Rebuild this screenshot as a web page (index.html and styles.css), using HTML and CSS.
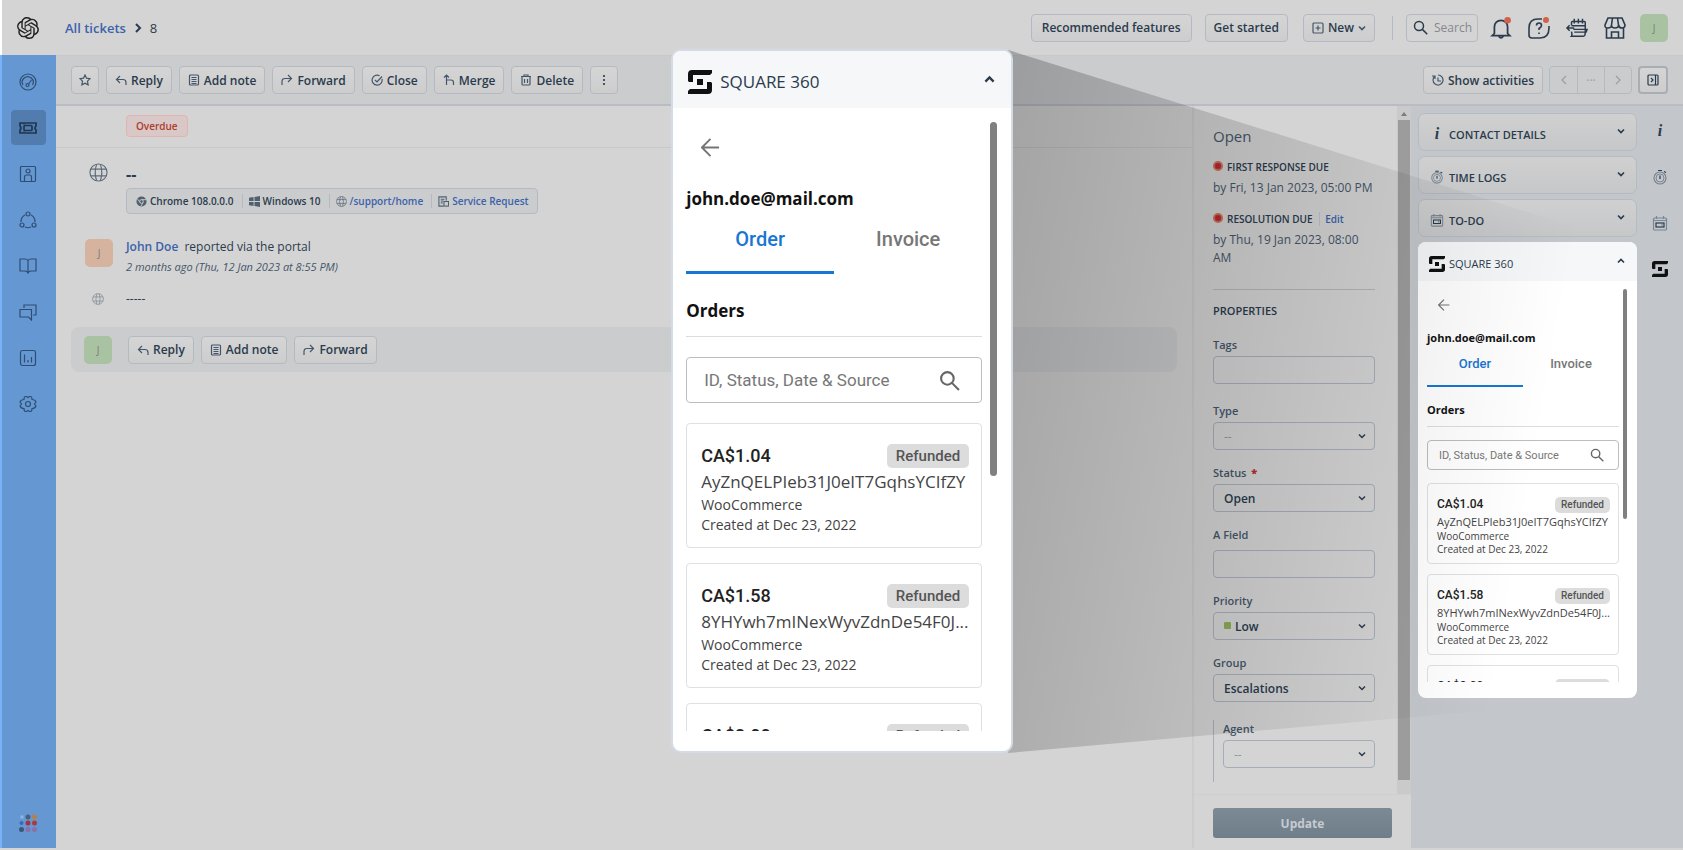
FILE: index.html
```
<!DOCTYPE html>
<html lang="en">
<head>
    <meta charset="UTF-8">
    <meta name="viewport" content="width=device-width, initial-scale=1.0">
    <title>Ticket 8 - Support</title>
    <link rel="stylesheet" href="styles.css">
</head>
<body>
    <!-- Shared icons -->
    <svg class="sprite" aria-hidden="true">
        <symbol id="i-reply" viewBox="0 0 12 12"><path d="M5 2L1.500 5.500 5 9M1.500 5.500H8Q11 5.500 11 8.500V11"/></symbol>
        <symbol id="i-forward" viewBox="0 0 12 12"><path d="M7 1l3.500 3.500L7 8M10.500 4.500H4Q1 4.500 1 7.500V11"/></symbol>
        <symbol id="i-note" viewBox="0 0 12 12"><rect x="1.500" y="1" width="9" height="10" rx="1"/><path d="M3.500 3.500h5M3.500 5.500h5M3.500 7.500h5M3.500 9.500h5"/></symbol>
        <symbol id="i-globe" viewBox="0 0 20 20"><circle cx="10" cy="10" r="9"/><path d="M2 6.500h16M2 13.500h16M8 1.500Q5 10 8 18.500M12 1.500Q15 10 12 18.500"/></symbol>
        <symbol id="i-down" viewBox="0 0 8 8"><path d="M1 2.500l3 3 3-3"/></symbol>
        <symbol id="i-up" viewBox="0 0 8 8"><path d="M1 5.500l3-3 3 3"/></symbol>
        <symbol id="i-search" viewBox="0 0 20 20"><circle cx="8" cy="8" r="6"/><path d="M12.500 12.500L19 19"/></symbol>
        <symbol id="i-watch" viewBox="0 0 16 16"><circle cx="8" cy="9" r="6" class="soft"/><circle cx="8" cy="9" r="4" class="soft thin"/><path d="M8 6.500V10M6 1.500h4M12 2.500l2 1"/></symbol>
        <symbol id="i-todo" viewBox="0 0 16 16"><rect x="1.500" y="3" width="13" height="12" rx="1" class="soft"/><path class="soft" d="M4.500 1v3M11.500 1v3M2 5.500h12"/><rect x="4" y="8" width="8" height="4"/><path d="M9.500 10h1"/></symbol>
        <symbol id="i-square" viewBox="0 0 24 24"><path d="M4 0H24V3l-2 2H5v7H1l-1-1V4Q0 0 4 0zM20 24H0V21l2-2H19V12h4l1 1v7Q24 24 20 24zM9 9h6v6H9z"/></symbol>
    </svg>

    <div class="app">
        <header class="topbar">
            <a href="#" class="logo" aria-label="Home">
                <svg viewBox="0 0 24 24"><path d="M22.282 9.821a5.985 5.985 0 0 0-.516-4.911 6.046 6.046 0 0 0-6.51-2.9A6.065 6.065 0 0 0 4.981 4.182a5.985 5.985 0 0 0-3.998 2.9 6.046 6.046 0 0 0 .743 7.097 5.98 5.98 0 0 0 .511 4.911 6.051 6.051 0 0 0 6.515 2.9A5.985 5.985 0 0 0 13.26 24a6.056 6.056 0 0 0 5.772-4.206 5.989 5.989 0 0 0 3.998-2.9 6.056 6.056 0 0 0-.748-7.073zm-9.022 12.608a4.476 4.476 0 0 1-2.876-1.041l.142-.08 4.778-2.758a.795.795 0 0 0 .393-.681v-6.737l2.02 1.169a.071.071 0 0 1 .038.052v5.583a4.504 4.504 0 0 1-4.495 4.494zm-9.661-4.125a4.471 4.471 0 0 1-.535-3.014l.142.085 4.783 2.758a.771.771 0 0 0 .781 0l5.843-3.369v2.332a.08.08 0 0 1-.033.062L9.74 19.95a4.499 4.499 0 0 1-6.141-1.646zM2.341 7.896a4.485 4.485 0 0 1 2.366-1.973V11.6a.766.766 0 0 0 .388.677l5.814 3.354-2.02 1.169a.076.076 0 0 1-.071 0l-4.83-2.787A4.504 4.504 0 0 1 2.341 7.872zm16.596 3.855L13.104 8.364 15.119 7.2a.076.076 0 0 1 .071 0l4.83 2.791a4.494 4.494 0 0 1-.676 8.104v-5.677a.79.79 0 0 0-.407-.667zm2.011-3.023l-.142-.085-4.774-2.782a.776.776 0 0 0-.785 0L9.409 9.23V6.897a.066.066 0 0 1 .028-.061l4.83-2.787a4.499 4.499 0 0 1 6.681 4.66zM8.307 12.863l-2.02-1.164a.08.08 0 0 1-.038-.057V6.074a4.499 4.499 0 0 1 7.376-3.454l-.142.081L8.704 5.459a.795.795 0 0 0-.393.681zm1.097-2.365l2.602-1.5 2.607 1.5v2.999l-2.597 1.5-2.607-1.5z"/></svg>
            </a>
            <nav class="breadcrumb">
                <a href="#">All tickets</a>
                <svg class="icon" viewBox="0 0 8 10"><path d="M2 1l4 4-4 4"/></svg>
                <span>8</span>
            </nav>
            <div class="topbar-actions">
                <button class="btn roomy">Recommended features</button>
                <button class="btn get-started">Get started</button>
                <button class="btn new-btn">
                    <svg class="icon" viewBox="0 0 12 12"><rect x="1" y="1" width="10" height="10" rx="1"/><path d="M6 3.500v5M3.500 6h5"/></svg>
                    New
                    <svg class="icon caret"><use href="#i-down"/></svg>
                </button>
                <span class="divider"></span>
                <label class="top-search">
                    <svg class="icon"><use href="#i-search"/></svg>
                    <input type="text" placeholder="Search" aria-label="Search">
                </label>
                <div class="top-icons">
                    <button class="icon-btn" aria-label="Notifications">
                        <svg class="icon" viewBox="0 0 20 20"><path d="M4 15V9a6 6 0 0 1 12 0v6l2 2H2zM8 17.500q2 3 4 0"/><circle class="dot" cx="16" cy="3" r="3"/></svg>
                    </button>
                    <button class="icon-btn" aria-label="Help">
                        <svg class="icon" viewBox="0 0 22 22"><path d="M14 2H10Q1 2 1 11v7q0 3 3 3h8q9 0 9-10V9M8.500 8.500q0-2.500 2.500-2.500t2.500 2.500q0 1.500-2.500 3v1.500M11 15.500v1.500"/><circle class="dot" cx="18" cy="3" r="3"/></svg>
                    </button>
                    <button class="icon-btn" aria-label="Schedule">
                        <svg class="icon" viewBox="0 0 24 22"><path d="M6 8V5q0-1 1-1h13q1 0 1 1v10M9 1v5M13.500 1v5M18 1v5M6 8.500h15M8 12.500h15l-1 3H9M1 11h8M4 8l-3 3 3 3M6 15q1 4 0 5h13q2 0 2-4"/></svg>
                    </button>
                    <button class="icon-btn" aria-label="Marketplace">
                        <svg class="icon" viewBox="0 0 22 22"><path d="M4 1h14l3 7q0 3-3 3t-3.500-3q0 3-3.500 3T7.500 8q0 3-3.500 3T1 8zM8.500 1l-1 7M13.500 1l1 7M2.500 11v10h17V11M7.500 21v-6h7v6"/></svg>
                    </button>
                </div>
                <button class="avatar green">J</button>
            </div>
        </header>

        <div class="shell">
            <nav class="sidebar">
                <a href="#" aria-label="Dashboard"><svg class="icon" viewBox="0 0 18 18"><circle cx="9" cy="9" r="8"/><path d="M4 12a5.500 5.500 0 1 1 9.500 0M9.500 11l3-4"/><circle cx="8.500" cy="12" r="1.500"/></svg></a>
                <a href="#" class="active" aria-label="Tickets"><svg class="icon heavy" viewBox="0 0 18 18"><path d="M1 4h3q1 1.500 2 0h11v3q-2 2 0 4v3H6q-1-1.500-2 0H1v-3q2-2 0-4z"/><rect x="5" y="6.500" width="8" height="5" rx="1"/></svg></a>
                <a href="#" aria-label="Contacts"><svg class="icon" viewBox="0 0 18 18"><rect x="1.500" y="1.500" width="15" height="15" rx="1"/><circle cx="9" cy="6" r="2"/><path d="M5.500 16V12q0-2 2-2h3q2 0 2 2v4"/></svg></a>
                <a href="#" aria-label="Social"><svg class="icon" viewBox="0 0 18 18"><circle cx="9" cy="3" r="2"/><circle cx="3" cy="14" r="2"/><circle cx="15" cy="14" r="2"/><path d="M6 4Q2 6 2 11M12 4q4 2 4 7M6 16q3 1.500 6 0"/></svg></a>
                <a href="#" aria-label="Solutions"><svg class="icon" viewBox="0 0 18 18"><path d="M9 3.500Q8 2 6 2H1v12h5q2 0 3 2 1-2 3-2h5V2h-5Q10 2 9 3.500V16"/></svg></a>
                <a href="#" aria-label="Forums"><svg class="icon" viewBox="0 0 18 18"><path d="M5 5V2h12v10h-3M1 6.500h11.500V14v3l-3-3H1z"/></svg></a>
                <a href="#" aria-label="Analytics"><svg class="icon" viewBox="0 0 18 18"><rect x="1.500" y="1.500" width="15" height="15" rx="2"/><path d="M5.500 5.500v8M9 11v2.500M12.500 8v5.500"/></svg></a>
                <a href="#" aria-label="Admin"><svg class="icon" viewBox="0 0 18 18"><path d="M6.500 1.500h1l1.500 1 1.500-1h1q1.500 0 1.500 3 3 0 4 2.500l-1.500 2L17 11q-1 2.500-4 2.500 0 3-1.500 3h-1L9 15.500l-1.500 1h-1q-1.500 0-1.500-3-3 0-4-2.500L2.500 9 1 7q1-2.500 4-2.500 0-3 1.500-3z"/><circle cx="9" cy="9" r="2.500"/></svg></a>
                <a href="#" class="switcher" aria-label="App switcher">
                    <svg viewBox="0 0 18 18"><rect x="1.500" y="1.500" width="3" height="3" fill="#8fb6e4"/><circle cx="9" cy="3" r="2.500" fill="#4a6078"/><circle cx="15.500" cy="3" r="2.500" fill="#b4813f"/><circle cx="2.500" cy="9" r="2" fill="#2f6ebe"/><circle cx="9" cy="9" r="2.500" fill="#a83240"/><circle cx="15.500" cy="9" r="2.500" fill="#a83c40"/><circle cx="2.500" cy="15.500" r="2.500" fill="#3a567a"/><circle cx="9" cy="15.500" r="2.500" fill="#8a72a8"/><circle cx="15.500" cy="15.500" r="2.500" fill="#8a72a8"/></svg>
                </a>
            </nav>

            <div class="workspace">
                <div class="toolbar">
                    <button class="btn" aria-label="Star"><svg class="icon star" viewBox="0 0 12 12"><path d="M6 1l1.500 3.200 3.500.5-2.500 2.500.6 3.600L6 9.100 2.900 10.800l.6-3.600L1 4.700l3.500-.5z"/></svg></button>
                    <button class="btn"><svg class="icon"><use href="#i-reply"/></svg>Reply</button>
                    <button class="btn"><svg class="icon"><use href="#i-note"/></svg>Add note</button>
                    <button class="btn"><svg class="icon"><use href="#i-forward"/></svg>Forward</button>
                    <button class="btn"><svg class="icon" viewBox="0 0 12 12"><path d="M11 5a5 5 0 1 1-2.500-3.300M4 6l2 2 5-5.500"/></svg>Close</button>
                    <button class="btn"><svg class="icon" viewBox="0 0 12 12"><path d="M1 3.500L3.500 1 6 3.500M3.500 1v10M3.500 6H8q2.500 0 2.500 2.500V11"/></svg>Merge</button>
                    <button class="btn"><svg class="icon" viewBox="0 0 12 12"><path d="M1 2.500h10M4 2.500V1h4v1.500M2 3v7q0 1 1 1h6q1 0 1-1V3M4.500 5v4M7.500 5v4"/></svg>Delete</button>
                    <button class="btn" aria-label="More"><svg class="icon more" viewBox="0 0 12 12"><path d="M6 1v2M6 5v2M6 9v2"/></svg></button>
                    <div class="toolbar-end">
                        <button class="btn"><svg class="icon" viewBox="0 0 12 12"><path d="M3 2a5 5 0 1 0 3-1M3 5V2H0M6 3.500V7h3"/></svg>Show activities</button>
                        <div class="pager">
                            <button aria-label="Previous"><svg class="icon" viewBox="0 0 8 10"><path d="M6 1L2 5l4 4"/></svg></button>
                            <button aria-label="List">···</button>
                            <button aria-label="Next"><svg class="icon" viewBox="0 0 8 10"><path d="M2 1l4 4-4 4"/></svg></button>
                        </div>
                        <button class="btn toggle" aria-label="Toggle panel"><svg class="icon" viewBox="0 0 12 12"><rect x="1" y="1" width="10" height="10" rx="1"/><path d="M8.500 1v10M4 4l2 2-2 2"/></svg></button>
                    </div>
                </div>

                <div class="columns">
                    <main class="ticket">
                        <div class="status-strip"><span class="overdue">Overdue</span></div>
                        <section class="row subject">
                            <svg class="icon globe"><use href="#i-globe"/></svg>
                            <div>
                                <h1>--</h1>
                                <ul class="meta">
                                    <li><svg class="icon" viewBox="0 0 12 12"><circle class="solid" cx="6" cy="6" r="5.500"/><circle class="ring" cx="6" cy="6" r="2"/><path class="ring" d="M6 4h5M4.300 7L2 3.500M7.700 7L5.500 11"/></svg>Chrome 108.0.0.0</li>
                                    <li><svg class="icon" viewBox="0 0 12 12"><path class="solid" d="M0 2l5-1v4.500H0zM6 1l6-1v5.500H6zM0 6.500h5V11l-5-1zM6 6.500h6V12l-6-1z"/></svg>Windows 10</li>
                                    <li><svg class="icon"><use href="#i-globe"/></svg><a href="#">/support/home</a></li>
                                    <li><svg class="icon" viewBox="0 0 12 12"><path d="M6 11H1V1h8v4M3 3.500h4M3 5.500h3M3 7.500h2"/><rect x="6.500" y="6" width="5" height="5"/></svg><a href="#">Service Request</a></li>
                                </ul>
                            </div>
                        </section>
                        <section class="row report">
                            <span class="avatar orange">J</span>
                            <div>
                                <p><a href="#">John Doe</a> reported via the portal</p>
                                <p class="when">2 months ago (Thu, 12 Jan 2023 at 8:55 PM)</p>
                            </div>
                        </section>
                        <section class="row message">
                            <svg class="icon globe-sm"><use href="#i-globe"/></svg>
                            <p>-----</p>
                        </section>
                        <section class="reply-bar">
                            <span class="avatar green">J</span>
                            <button class="btn"><svg class="icon"><use href="#i-reply"/></svg>Reply</button>
                            <button class="btn"><svg class="icon"><use href="#i-note"/></svg>Add note</button>
                            <button class="btn"><svg class="icon"><use href="#i-forward"/></svg>Forward</button>
                        </section>
                    </main>

                    <aside class="properties">
                        <div class="properties-scroll">
                            <form class="properties-form" id="propsForm">
                                <h2>Open</h2>
                                <div class="due">
                                    <h3><i class="alert"></i>FIRST RESPONSE DUE</h3>
                                    <p>by Fri, 13 Jan 2023, 05:00 PM</p>
                                </div>
                                <div class="due">
                                    <h3><i class="alert"></i>RESOLUTION DUE <a href="#">Edit</a></h3>
                                    <p>by Thu, 19 Jan 2023, 08:00 AM</p>
                                </div>
                                <h3 class="section-title">PROPERTIES</h3>
                                <div class="field wide"><label for="tags">Tags</label><input type="text" id="tags"></div>
                                <div class="field"><label for="type">Type</label>
                                    <div class="select empty"><select id="type"><option>--</option></select><svg class="icon"><use href="#i-down"/></svg></div></div>
                                <div class="field"><label for="status">Status <b>*</b></label>
                                    <div class="select"><select id="status"><option>Open</option></select><svg class="icon"><use href="#i-down"/></svg></div></div>
                                <div class="field spaced"><label for="afield">A Field</label><input type="text" id="afield"></div>
                                <div class="field"><label for="priority">Priority</label>
                                    <div class="select low"><select id="priority"><option>Low</option></select><svg class="icon"><use href="#i-down"/></svg></div></div>
                                <div class="field wide"><label for="group">Group</label>
                                    <div class="select"><select id="group"><option>Escalations</option></select><svg class="icon"><use href="#i-down"/></svg></div></div>
                                <div class="field nested"><label for="agent">Agent</label>
                                    <div class="select empty"><select id="agent"><option>--</option></select><svg class="icon"><use href="#i-down"/></svg></div></div>
                            </form>
                            <div class="scrollbar"><span class="arrow"></span><span class="thumb"></span></div>
                        </div>
                        <div class="properties-footer"><button class="update" form="propsForm">Update</button></div>
                    </aside>

                    <aside class="apps">
                        <div class="apps-list">
                            <button class="accordion"><em>i</em>CONTACT DETAILS<svg class="icon caret"><use href="#i-down"/></svg></button>
                            <button class="accordion"><svg class="icon pic"><use href="#i-watch"/></svg>TIME LOGS<svg class="icon caret"><use href="#i-down"/></svg></button>
                            <button class="accordion"><svg class="icon pic"><use href="#i-todo"/></svg>TO-DO<svg class="icon caret"><use href="#i-down"/></svg></button>
                            <div class="widget small"></div>
                        </div>
                        <nav class="rail">
                            <a href="#" aria-label="Contact details"><em>i</em></a>
                            <a href="#" aria-label="Time logs"><svg class="icon"><use href="#i-watch"/></svg></a>
                            <a href="#" aria-label="To-do"><svg class="icon"><use href="#i-todo"/></svg></a>
                            <a href="#" aria-label="Square 360"><svg class="square-logo"><use href="#i-square"/></svg></a>
                        </nav>
                    </aside>
                </div>
            </div>
        </div>

        <div class="beam"></div>
        <div class="widget large"></div>
    </div>

    <script>
        const orders = [
            { amount: 'CA$1.04', status: 'Refunded', id: 'AyZnQELPIeb31J0eIT7GqhsYCIfZY', source: 'WooCommerce', date: 'Dec 23, 2022' },
            { amount: 'CA$1.58', status: 'Refunded', id: '8YHYwh7mINexWyvZdnDe54F0J...', source: 'WooCommerce', date: 'Dec 23, 2022' },
            { amount: 'CA$2.00', status: 'Refunded', id: 'Qm4TzWc81LrNaPxYe0DfKs7U...', source: 'WooCommerce', date: 'Dec 23, 2022' }
        ];

        // The side panel and the enlarged view show the same widget
        document.querySelectorAll('.widget').forEach(widget => {
            widget.innerHTML = `
                <button class="widget-header">
                    <svg class="square-logo"><use href="#i-square"/></svg>
                    SQUARE 360
                    <svg class="icon caret"><use href="#i-up"/></svg>
                </button>
                <div class="widget-body">
                    <div class="widget-content">
                        <button class="back" aria-label="Back"><svg class="icon" viewBox="0 0 20 20"><path d="M19 10H2M10 1L1 10l9 9"/></svg></button>
                        <p class="email">john.doe@mail.com</p>
                        <div class="tabs">
                            <button class="tab active">Order</button>
                            <button class="tab">Invoice</button>
                        </div>
                        <h4>Orders</h4>
                        <label class="order-search">
                            <input type="text" placeholder="ID, Status, Date &amp; Source" aria-label="Search orders">
                            <svg class="icon"><use href="#i-search"/></svg>
                        </label>
                        ${orders.map(order => `
                            <article class="order">
                                <div class="order-top"><strong>${order.amount}</strong><span class="badge">${order.status}</span></div>
                                <p class="order-id">${order.id}</p>
                                <p>${order.source}</p>
                                <p>Created at ${order.date}</p>
                            </article>
                        `).join('')}
                    </div>
                    <span class="widget-thumb"></span>
                </div>
            `;
        });
    </script>
</body>
</html>
```

FILE: styles.css
```
:root {
    --bg: #d4d4d4;
    --panel: #cbccce;
    --apps-bg: #c3c7cb;
    --line: #b5bac2;
    --text: #2a3b4d;
    --muted: #45566a;
    --link: #3b62ab;
    --blue: #1976d2;
}

* {
    margin: 0;
    padding: 0;
    box-sizing: border-box;
}

body {
    font-family: 'Open Sans', 'Noto Sans', sans-serif;
    font-size: 12px;
    color: var(--text);
    background-color: var(--bg);
}

button,
input,
select {
    font: inherit;
    color: inherit;
    background: none;
    border: none;
}

a {
    color: var(--link);
    text-decoration: none;
}

ul {
    list-style: none;
}

.sprite {
    position: absolute;
    width: 0;
    height: 0;
}

.icon {
    width: 12px;
    height: 12px;
    flex: none;
    fill: none;
    stroke: currentColor;
    stroke-width: 1.2;
}

.icon .solid {
    fill: currentColor;
    stroke: none;
}

.icon .ring {
    stroke: var(--panel);
    stroke-width: 1;
}

.icon .dot {
    fill: #d0614a;
    stroke: none;
}

.soft {
    stroke: #7b8794;
}

.thin {
    stroke-width: 1;
}

.icon.caret {
    width: 8px;
    height: 8px;
    stroke-width: 1.7;
}

.app {
    position: relative;
    display: flex;
    flex-direction: column;
    height: 100vh;
    min-height: 850px;
    overflow: hidden;
}

/* Top bar */
.topbar {
    display: flex;
    align-items: center;
    height: 55px;
    padding-right: 15px;
    border-left: 2px solid #fff;
}

.logo {
    display: flex;
    justify-content: center;
    width: 52px;
}

.logo svg {
    width: 22px;
    height: 22px;
    fill: #222;
}

.breadcrumb {
    display: flex;
    align-items: center;
    gap: 8px;
    padding-left: 11px;
    font-size: 13px;
    font-weight: 600;
}

.breadcrumb .icon {
    width: 8px;
    height: 10px;
    stroke-width: 2;
}

.breadcrumb span {
    font-weight: 400;
}

.topbar-actions {
    display: flex;
    align-items: center;
    margin-left: auto;
}

.btn {
    display: inline-flex;
    align-items: center;
    justify-content: center;
    gap: 4px;
    height: 28px;
    min-width: 28px;
    padding: 0 8px;
    border: 1px solid var(--line);
    border-radius: 4px;
    background: linear-gradient(#d5d5d5, #cdcdce);
    font-weight: 600;
    white-space: nowrap;
}

.btn.roomy {
    padding: 0 10px;
}

.btn[aria-label] {
    padding: 0 7px;
}

.btn .icon {
    color: var(--muted);
}

.get-started {
    margin: 0 15px 0 13px;
}

.topbar .divider {
    width: 1px;
    height: 24px;
    margin: 0 13px 0 17px;
    background-color: var(--line);
}

.top-search {
    display: flex;
    align-items: center;
    gap: 6px;
    width: 72px;
    height: 28px;
    padding-left: 6px;
    border: 1px solid var(--line);
    border-radius: 4px;
}

.top-search .icon {
    width: 15px;
    height: 15px;
    stroke-width: 2;
}

.top-search input {
    width: 42px;
    outline: none;
}

.top-search input::placeholder {
    color: #84898f;
}

.top-icons {
    display: flex;
    gap: 16px;
    margin: 0 14px 0 12px;
}

.icon-btn {
    display: flex;
}

.icon-btn .icon {
    width: 22px;
    height: 22px;
    stroke-width: 1.6;
    overflow: visible;
}

.avatar {
    display: flex;
    align-items: center;
    justify-content: center;
    width: 28px;
    height: 28px;
    border-radius: 5px;
    font-size: 10px;
    color: #7d7d7d;
}

.avatar.green {
    background-color: #a9c3a2;
}

.avatar.orange {
    background-color: #d6b39e;
}

/* Sidebar */
.shell {
    display: flex;
    flex: 1;
    min-height: 0;
    padding-bottom: 2px;
}

.sidebar {
    display: flex;
    flex-direction: column;
    align-items: center;
    gap: 11px;
    width: 56px;
    flex: none;
    padding: 9px 2px 8px 0;
    border-left: 2px solid #78b3fa;
    background-color: #6598d2;
}

.sidebar a {
    display: flex;
    align-items: center;
    justify-content: center;
    width: 35px;
    height: 35px;
    border-radius: 4px;
    color: #2f4d72;
}

.sidebar a.active {
    background-color: #527cae;
    color: #1f3550;
}

.sidebar svg {
    width: 18px;
    height: 18px;
}

.sidebar .heavy {
    stroke-width: 1.7;
}

.sidebar .switcher {
    margin-top: auto;
}

/* Toolbar */
.workspace {
    display: flex;
    flex-direction: column;
    flex: 1;
    min-width: 0;
}

.toolbar {
    display: flex;
    align-items: center;
    gap: 7px;
    height: 51px;
    flex: none;
    padding: 10px 15px;
    border-top: 1px solid #c6c8ca;
    border-bottom: 2px solid #b9bcc4;
    background-color: var(--panel);
}

.toolbar-end {
    display: flex;
    gap: 6px;
    margin-left: auto;
}

.more {
    stroke-width: 2;
}

.pager {
    display: flex;
    border: 1px solid var(--line);
    border-radius: 4px;
    color: #9a9fa5;
}

.pager button {
    display: flex;
    align-items: center;
    justify-content: center;
    width: 27px;
}

.pager button + button {
    border-left: 1px solid var(--line);
}

.pager .icon {
    width: 8px;
    height: 10px;
}

.btn.toggle {
    border: 2px solid #a9adb4;
}

.btn.toggle .icon {
    color: var(--text);
}

/* Ticket */
.columns {
    display: flex;
    flex: 1;
    min-height: 0;
}

.ticket {
    flex: 1;
    min-width: 0;
}

.status-strip {
    height: 42px;
    padding: 9px 0 0 70px;
    border-bottom: 1px solid #c6c8c9;
}

.overdue {
    display: inline-block;
    padding: 0 9px;
    border: 1px solid #dfb5b0;
    border-radius: 4px;
    background-color: #dac8c8;
    font-size: 10px;
    font-weight: 600;
    line-height: 20px;
    color: #ab3d2d;
}

.row {
    display: grid;
    grid-template-columns: 70px 1fr;
}

.subject {
    padding-top: 15px;
}

.subject .globe {
    width: 19px;
    height: 19px;
    margin-left: 33px;
    color: #5d6b7a;
}

h1 {
    font-size: 16px;
    line-height: 22px;
}

.meta {
    display: inline-flex;
    align-items: center;
    height: 26px;
    margin-top: 3px;
    padding: 0 1px;
    border: 1px solid var(--line);
    border-radius: 4px;
    background-color: var(--panel);
    font-size: 10px;
    font-weight: 600;
}

.meta li {
    display: flex;
    align-items: center;
    gap: 3px;
    padding: 0 8px;
}

.meta li + li {
    padding-left: 6px;
    border-left: 1px solid var(--line);
}

.meta .icon {
    width: 11px;
    height: 11px;
    color: #51606f;
}

.report {
    padding-top: 23px;
}

.report .avatar {
    margin: 2px 0 0 29px;
}

.report p {
    line-height: 20px;
}

.report a {
    margin-right: 3px;
    font-weight: 600;
}

.report .when {
    font-size: 11px;
    font-style: italic;
    color: var(--muted);
}

.message {
    padding: 12px 0 18px;
}

.message .globe-sm {
    margin: 4px 0 0 36px;
    color: #7d8894;
}

.message p {
    line-height: 20px;
}

.reply-bar {
    display: flex;
    align-items: center;
    gap: 7px;
    height: 45px;
    margin: 0 15px;
    padding-left: 13px;
    border-radius: 8px;
    background-color: var(--panel);
}

.reply-bar .avatar {
    margin-right: 9px;
}

/* Properties */
.properties {
    display: flex;
    flex-direction: column;
    width: 219px;
    flex: none;
    border-left: 2px solid #cacccd;
}

.properties-scroll {
    display: flex;
    flex: 1;
    min-height: 0;
    overflow: hidden;
}

.properties-form {
    flex: 1;
    padding: 18px 22px 0 19px;
}

h2 {
    font-size: 15px;
    font-weight: 400;
    line-height: 24px;
    color: var(--muted);
}

h3 {
    font-size: 11px;
    font-weight: 600;
    line-height: 20px;
    white-space: nowrap;
}

.due {
    padding: 9px 0 3px;
}

.due h3 {
    font-size: 10px;
}

.due h3 a {
    margin-left: 4px;
    padding-left: 5px;
    border-left: 1px solid #bcc4cc;
}

.due p {
    padding-top: 2px;
    line-height: 18px;
    color: var(--muted);
}

.alert {
    display: inline-block;
    width: 10px;
    height: 10px;
    margin-right: 4px;
    border: 2px solid #c9705c;
    border-radius: 50%;
    background-color: #b8292f;
}

.section-title {
    margin: 19px 0 15px;
    padding-top: 11px;
    border-top: 1px solid #b3b5b8;
}

.field {
    margin-bottom: 14px;
}

.field.wide {
    margin-bottom: 18px;
}

.field label {
    display: block;
    margin-bottom: 2px;
    font-size: 11px;
    font-weight: 600;
    line-height: 18px;
    color: var(--muted);
}

.field.spaced label {
    margin-bottom: 6px;
}

.field label b {
    margin-left: 2px;
    color: #b8292f;
}

.field input,
.select select {
    display: block;
    width: 100%;
    height: 28px;
    padding: 0 10px;
    border: 1px solid #a7adb8;
    border-radius: 4px;
    appearance: none;
    font-weight: 600;
}

.select {
    position: relative;
}

.select .icon {
    position: absolute;
    top: 10px;
    right: 9px;
    width: 8px;
    height: 8px;
    stroke-width: 1.5;
    pointer-events: none;
}

.select.empty select {
    color: #90959b;
    font-weight: 400;
}

.select.low select {
    padding-left: 21px;
}

.select.low::before {
    content: '';
    position: absolute;
    top: 10px;
    left: 11px;
    width: 7px;
    height: 7px;
    border-radius: 1px;
    background-color: #8bab57;
}

.nested {
    padding: 0 0 14px 9px;
    border-left: 1px solid #a7adb8;
}

.scrollbar {
    display: flex;
    flex-direction: column;
    align-items: center;
    width: 14px;
    padding: 6px 1px 14px;
    background-color: #cacaca;
}

.scrollbar .arrow {
    border: 3px solid transparent;
    border-top: none;
    border-bottom: 4px solid #7c7c7c;
}

.scrollbar .thumb {
    flex: 1;
    width: 100%;
    margin-top: 4px;
    background-color: #9c9c9c;
}

.properties-footer {
    padding: 13px 19px 10px;
    border-top: 1px solid #cfcfcf;
}

.update {
    width: 100%;
    height: 30px;
    border-radius: 3px;
    background: linear-gradient(#7c8a95, #6f7e89);
    font-weight: 700;
    color: #c5cbd1;
}

/* Apps panel */
.apps {
    display: flex;
    width: 272px;
    flex: none;
    background-color: var(--apps-bg);
}

.apps-list {
    display: flex;
    flex-direction: column;
    gap: 5px;
    width: 226px;
    padding: 7px 0 0 7px;
}

.accordion {
    display: flex;
    align-items: center;
    gap: 5px;
    height: 38px;
    padding: 4px 11px 0 11px;
    border: 1px solid #b6bbc3;
    border-radius: 7px;
    background: linear-gradient(#d0d0d1, #c6c7c8);
    font-size: 11px;
    font-weight: 600;
}

.accordion .pic {
    width: 14px;
    height: 14px;
}

.accordion .caret {
    margin: 0 0 6px auto;
}

em {
    width: 14px;
    text-align: center;
    font-family: 'Liberation Serif', serif;
    font-size: 16px;
    font-weight: 700;
}

.rail {
    display: flex;
    flex-direction: column;
    align-items: center;
    gap: 30px;
    flex: 1;
    padding-top: 17px;
}

.rail a {
    display: flex;
    align-items: center;
    justify-content: center;
    height: 16px;
    color: var(--text);
}

.rail svg {
    width: 16px;
    height: 16px;
}

.beam {
    position: absolute;
    top: 50px;
    left: calc(40% + 335px);
    right: 46px;
    height: 703px;
    background: linear-gradient(100deg, rgba(0, 0, 0, 0.23), rgba(0, 0, 0, 0.04) 65%, transparent 80%);
    clip-path: polygon(0 0, 100% 196px, 100% 647px, 0 100%);
    pointer-events: none;
}

/* Square 360 widget, in two sizes */
.widget {
    display: flex;
    flex-direction: column;
    width: var(--width);
    height: var(--height);
    overflow: hidden;
    padding-bottom: var(--foot);
    border-radius: 8px;
    background-color: #fff;
    font-size: var(--text-sm);
}

.widget.small {
    --width: 219px;
    --height: 456px;
    --foot: 16px;
    --head: 39px;
    --edge: 9px;
    --logo: 16px;
    --gap: 4px;
    --thumb: 4px;
    --thumb-height: 230px;
    --back-row: 48px;
    --arrow: 12px;
    --row: 18px;
    --tab: 40px;
    --tab-line: 2px;
    --title-top: 14px;
    --title-bottom: 7px;
    --section: 13px;
    --search: 30px;
    --glass: 14px;
    --card-gap: 10px;
    --card-padding: 12px 8px 7px 9px;
    --row-lg: 17px;
    --row-sm: 13px;
    --badge: 16px;
    --badge-padding: 6px;
    --text-sm: 10px;
    --text-md: 11px;
    --text-lg: 12px;
    --text-tab: 13px;
    --text-badge: 10px;
}

.widget.large {
    --width: 342px;
    --height: 704px;
    --foot: 20px;
    --head: 57px;
    --edge: 13px;
    --logo: 24px;
    --gap: 8px;
    --thumb: 7px;
    --thumb-height: 354px;
    --back-row: 78px;
    --arrow: 19px;
    --row: 26px;
    --tab: 62px;
    --tab-line: 3px;
    --title-top: 24px;
    --title-bottom: 12px;
    --section: 20px;
    --search: 46px;
    --glass: 21px;
    --card-gap: 15px;
    --card-padding: 19px 12px 12px 14px;
    --row-lg: 26px;
    --row-sm: 20px;
    --badge: 24px;
    --badge-padding: 9px;
    --text-sm: 14px;
    --text-md: 17px;
    --text-lg: 18px;
    --text-tab: 20px;
    --text-badge: 15px;
    position: absolute;
    top: 49px;
    left: calc(40% - 2px);
    border: 2px solid #d3dce6;
    border-radius: 10px;
}

.widget-header {
    display: flex;
    align-items: center;
    gap: var(--gap);
    height: var(--head);
    flex: none;
    padding: 4px calc(var(--edge) + 3px) 0 calc(var(--edge) + 2px);
    background-color: #f5f7f9;
    font-size: var(--text-md);
}

.square-logo {
    width: var(--logo);
    height: var(--logo);
    fill: #111;
}

.widget-header .caret {
    margin: 0 0 5px auto;
}

.large .widget-header .caret {
    width: 11px;
    height: 11px;
}

.widget-body {
    display: flex;
    flex: 1;
    gap: var(--gap);
    min-height: 0;
    overflow: hidden;
    padding: 0 calc(var(--edge) + 1px) 0 var(--edge);
}

.widget-content {
    flex: 1;
    min-width: 0;
}

.back {
    display: flex;
    align-items: center;
    height: var(--back-row);
    padding-left: calc(var(--edge) + 2px);
    color: #757575;
}

.back .icon {
    width: var(--arrow);
    height: var(--arrow);
    stroke-width: 2;
}

.email {
    font-size: var(--text-md);
    font-weight: 700;
    line-height: var(--row);
    color: #111;
}

.tabs {
    display: flex;
}

.tab {
    flex: 1;
    height: var(--tab);
    padding-bottom: 5px;
    border-bottom: var(--tab-line) solid transparent;
    font-family: Roboto, sans-serif;
    font-size: var(--text-tab);
    font-weight: 500;
    color: #777;
}

.tab.active {
    border-bottom-color: var(--blue);
    color: var(--blue);
}

h4 {
    padding: var(--title-top) 0 var(--title-bottom);
    border-bottom: 1px solid #ddd;
    font-size: var(--text-md);
    line-height: var(--row);
    color: #111;
}

.order-search {
    display: flex;
    align-items: center;
    height: var(--search);
    margin: var(--section) 0;
    padding: 0 14px 0 11px;
    border: 1px solid #bdbdbd;
    border-radius: 4px;
}

.large .order-search {
    padding: 0 21px 0 17px;
}

.order-search input {
    flex: 1;
    min-width: 0;
    outline: none;
    font-family: Roboto, sans-serif;
    font-size: var(--text-md);
}

.order-search input::placeholder {
    color: #777;
}

.order-search .icon {
    width: var(--glass);
    height: var(--glass);
    stroke-width: 2;
    color: #666;
}

.order {
    margin-bottom: var(--card-gap);
    padding: var(--card-padding);
    border: 1px solid #e0e0e0;
    border-radius: 4px;
    line-height: var(--row-sm);
    color: #444;
}

.order-top {
    display: flex;
    align-items: center;
    justify-content: space-between;
    height: var(--row-lg);
}

.order-top strong {
    font-family: Roboto, sans-serif;
    font-size: var(--text-lg);
    font-weight: 500;
    color: #222;
}

.badge {
    padding: 0 var(--badge-padding);
    border-radius: 5px;
    background-color: #dcdcdc;
    font-family: Roboto, sans-serif;
    font-size: var(--text-badge);
    font-weight: 500;
    line-height: var(--badge);
    color: #555;
}

.order-id {
    white-space: nowrap;
    font-size: var(--text-md);
    line-height: var(--row-lg);
}

.widget-thumb {
    width: var(--thumb);
    height: var(--thumb-height);
    margin-top: 8px;
    border-radius: 4px;
    background-color: #808080;
}

.large .widget-thumb {
    margin-top: 14px;
}
```
